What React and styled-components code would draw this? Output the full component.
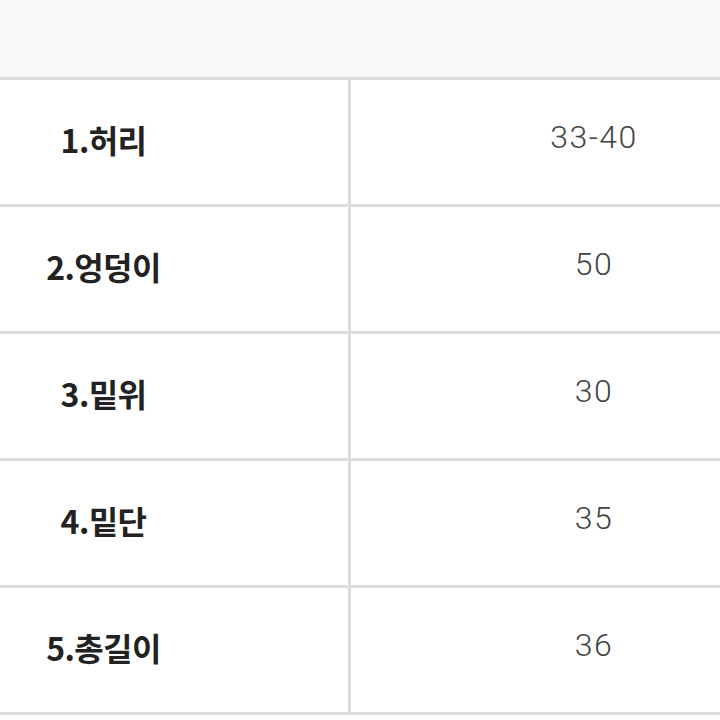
import styled, { createGlobalStyle } from 'styled-components';

const rows = [
  { label: '1.허리', value: '33-40' },
  { label: '2.엉덩이', value: '50' },
  { label: '3.밑위', value: '30' },
  { label: '4.밑단', value: '35' },
  { label: '5.총길이', value: '36' },
];

const App = () => {
  return (
    <Page>
      <GlobalStyle />
      <Band />
      <Sheet>
        {rows.map((row) => (
          <Row key={row.label}>
            <Label>{row.label}</Label>
            <Value>{row.value}</Value>
          </Row>
        ))}
      </Sheet>
    </Page>
  );
};

const GlobalStyle = createGlobalStyle`
  html, body {
    margin: 0;
    padding: 0;
    background: #ffffff;
    overflow: hidden;
  }
`;

const Page = styled.div`
  width: 720px;
  height: 720px;
  overflow: hidden;
  background: #ffffff;
`;

const Band = styled.div`
  height: 77px;
  background: #f7f8fa;
`;

const Sheet = styled.div`
  display: grid;
  width: 978px;
  margin-left: -141px;
  row-gap: 3px;
  padding: 3px 0;
  background: #dcdcdc;
`;

const Row = styled.div`
  display: grid;
  grid-template-columns: 489px 486px;
  column-gap: 3px;
  height: 124px;
`;

const Cell = styled.div`
  display: flex;
  align-items: center;
  justify-content: center;
  background: #ffffff;
`;

const Label = styled(Cell)`
  padding-bottom: 6px;
  font-family: 'Noto Sans CJK KR', 'Noto Sans', sans-serif;
  font-weight: 700;
  font-size: 32px;
  letter-spacing: -0.6px;
  color: #222222;
`;

const Value = styled(Cell)`
  padding-bottom: 10px;
  font-family: Roboto, 'Liberation Sans', sans-serif;
  font-weight: 300;
  font-size: 32px;
  color: #444444;
  letter-spacing: 1.5px;
`;

export default App;
